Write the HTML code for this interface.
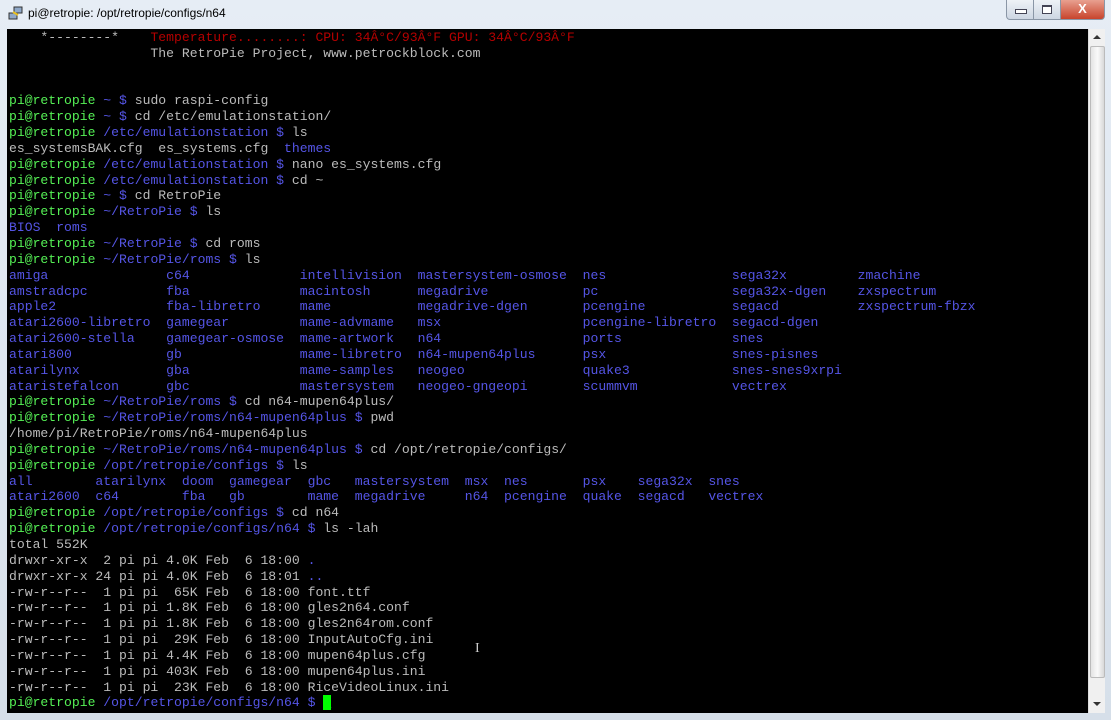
<!DOCTYPE html>
<html><head><meta charset="utf-8"><style>
html,body{margin:0;padding:0;width:1111px;height:720px;overflow:hidden;background:#dde5ee;}
.frame{position:absolute;left:0;top:0;width:1111px;height:720px;background:linear-gradient(#e6edf5,#d6dfe9);}
.title{position:absolute;left:28px;top:6px;font:12px "Liberation Sans",sans-serif;color:#000;}
.icon{position:absolute;left:8px;top:6px;width:15px;height:15px;}
.term{position:absolute;left:7px;top:29px;width:1081px;height:684px;background:#000;overflow:hidden;}
pre{margin:0;position:absolute;left:2px;top:1px;font-family:"Liberation Mono",monospace;font-size:13.1px;line-height:15.84px;color:#bbbbbb;}
.g{color:#55f055}.b{color:#5555e6}.r{color:#b40000}
.cur{background:#00ff00;color:#00ff00}
.sb{position:absolute;left:1088px;top:29px;width:16px;height:684px;background:#f0f0f0;border-left:1px solid #ddd;}
.bt{position:absolute;top:0;height:19px;border:1px solid #8a96a6;border-top:none;background:linear-gradient(#eef2f7,#cdd6e2);}
</style></head><body>
<div class="frame"></div>
<svg class="icon" viewBox="0 0 15 15"><rect x="6" y="1" width="8" height="6" fill="#8fa8c8" stroke="#333" stroke-width="1"/><rect x="1" y="7" width="8" height="6" fill="#8fa8c8" stroke="#333" stroke-width="1"/><path d="M5 6 L10 9" stroke="#e8c020" stroke-width="2"/></svg>
<div class="title">pi@retropie: /opt/retropie/configs/n64</div>
<div class="bt" style="left:1006px;width:26px;border-radius:0 0 0 4px"><div style="position:absolute;left:8px;top:9px;width:10px;height:3px;background:#fff;border:1px solid #445"></div></div>
<div class="bt" style="left:1033px;width:26px"><div style="position:absolute;left:8px;top:5px;width:8px;height:6px;border:1px solid #445;border-top-width:2px;background:#fff"></div></div>
<div class="bt" style="left:1060px;width:43px;background:linear-gradient(#e8a090,#c8442c);border-radius:0 0 4px 0;color:#fff;font:bold 13px 'Liberation Sans',sans-serif;text-align:center;line-height:18px">X</div>
<div class="term"><pre>    *--------*    <span class="r">Temperature........: CPU: 34Â°C/93Â°F GPU: 34Â°C/93Â°F</span>
                  The RetroPie Project, www.petrockblock.com


<span class="g">pi@retropie</span> <span class="b">~ $</span> sudo raspi-config
<span class="g">pi@retropie</span> <span class="b">~ $</span> cd /etc/emulationstation/
<span class="g">pi@retropie</span> <span class="b">/etc/emulationstation $</span> ls
es_systemsBAK.cfg  es_systems.cfg  <span class="b">themes</span>
<span class="g">pi@retropie</span> <span class="b">/etc/emulationstation $</span> nano es_systems.cfg
<span class="g">pi@retropie</span> <span class="b">/etc/emulationstation $</span> cd ~
<span class="g">pi@retropie</span> <span class="b">~ $</span> cd RetroPie
<span class="g">pi@retropie</span> <span class="b">~/RetroPie $</span> ls
<span class="b">BIOS  roms</span>
<span class="g">pi@retropie</span> <span class="b">~/RetroPie $</span> cd roms
<span class="g">pi@retropie</span> <span class="b">~/RetroPie/roms $</span> ls
<span class="b">amiga               c64              intellivision  mastersystem-osmose  nes                sega32x         zmachine
amstradcpc          fba              macintosh      megadrive            pc                 sega32x-dgen    zxspectrum
apple2              fba-libretro     mame           megadrive-dgen       pcengine           segacd          zxspectrum-fbzx
atari2600-libretro  gamegear         mame-advmame   msx                  pcengine-libretro  segacd-dgen
atari2600-stella    gamegear-osmose  mame-artwork   n64                  ports              snes
atari800            gb               mame-libretro  n64-mupen64plus      psx                snes-pisnes
atarilynx           gba              mame-samples   neogeo               quake3             snes-snes9xrpi
ataristefalcon      gbc              mastersystem   neogeo-gngeopi       scummvm            vectrex</span>
<span class="g">pi@retropie</span> <span class="b">~/RetroPie/roms $</span> cd n64-mupen64plus/
<span class="g">pi@retropie</span> <span class="b">~/RetroPie/roms/n64-mupen64plus $</span> pwd
/home/pi/RetroPie/roms/n64-mupen64plus
<span class="g">pi@retropie</span> <span class="b">~/RetroPie/roms/n64-mupen64plus $</span> cd /opt/retropie/configs/
<span class="g">pi@retropie</span> <span class="b">/opt/retropie/configs $</span> ls
<span class="b">all        atarilynx  doom  gamegear  gbc   mastersystem  msx  nes       psx    sega32x  snes
atari2600  c64        fba   gb        mame  megadrive     n64  pcengine  quake  segacd   vectrex</span>
<span class="g">pi@retropie</span> <span class="b">/opt/retropie/configs $</span> cd n64
<span class="g">pi@retropie</span> <span class="b">/opt/retropie/configs/n64 $</span> ls -lah
total 552K
drwxr-xr-x  2 pi pi 4.0K Feb  6 18:00 <span class="b">.</span>
drwxr-xr-x 24 pi pi 4.0K Feb  6 18:01 <span class="b">..</span>
-rw-r--r--  1 pi pi  65K Feb  6 18:00 font.ttf
-rw-r--r--  1 pi pi 1.8K Feb  6 18:00 gles2n64.conf
-rw-r--r--  1 pi pi 1.8K Feb  6 18:00 gles2n64rom.conf
-rw-r--r--  1 pi pi  29K Feb  6 18:00 InputAutoCfg.ini
-rw-r--r--  1 pi pi 4.4K Feb  6 18:00 mupen64plus.cfg
-rw-r--r--  1 pi pi 403K Feb  6 18:00 mupen64plus.ini
-rw-r--r--  1 pi pi  23K Feb  6 18:00 RiceVideoLinux.ini
<span class="g">pi@retropie</span> <span class="b">/opt/retropie/configs/n64 $</span> <span class="cur">_</span></pre>
<div style="position:absolute;left:468px;top:612px;color:#ccc;font:14px 'Liberation Serif',serif">I</div>
</div>
<div class="sb">
<div style="position:absolute;left:4px;top:6px;width:0;height:0;border-left:4px solid transparent;border-right:4px solid transparent;border-bottom:4px solid #333"></div>
<div style="position:absolute;left:1px;top:17px;width:13px;height:630px;background:linear-gradient(90deg,#e4e4e4,#fafafa,#d8d8d8);border:1px solid #bbb;border-radius:2px"></div>
<div style="position:absolute;left:4px;top:673px;width:0;height:0;border-left:4px solid transparent;border-right:4px solid transparent;border-top:4px solid #333"></div>
</div>
</body></html>
